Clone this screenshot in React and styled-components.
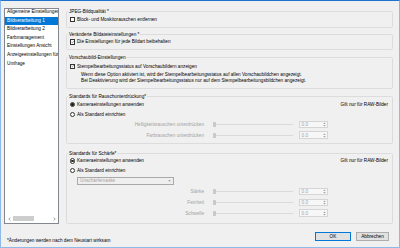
import styled, { createGlobalStyle } from 'styled-components';

const GlobalStyle = createGlobalStyle`
  html, body {
    margin: 0;
    padding: 0;
    background: #f0f0f0;
  }
  body {
    font-family: "Liberation Sans", Arial, sans-serif;
  }
  * {
    box-sizing: border-box;
  }
`;

const Window = styled.div`
  width: 400px;
  height: 248px;
  background: #f0f0f0;
  border: 1px solid #8fb9e6;
  border-top: 1px solid #1e74cc;
  display: flex;
  flex-direction: column;
  font-size: 4.7px;
  color: #000;
  overflow: hidden;
`;

const Body = styled.div`
  display: flex;
  height: 223px;
  flex: none;
  padding: 7px 6px 0 3px;
`;

const Sidebar = styled.div`
  width: 55px;
  height: 215.6px;
  background: #fff;
  border: 1px solid #828790;
  display: flex;
  flex-direction: column;
  overflow: hidden;
`;

const ItemList = styled.div`
  flex: 1;
  overflow: hidden;
`;

const ItemInner = styled.div`
  margin-top: -0.9px;
`;

const Item = styled.div`
  height: 8.6px;
  line-height: 8.6px;
  padding-left: 2px;
  white-space: nowrap;
  overflow: hidden;
  background: ${p => (p.$active ? '#0078d7' : 'transparent')};
  color: ${p => (p.$active ? '#fff' : '#000')};
`;

const HScroll = styled.div`
  height: 6.6px;
  display: flex;
  align-items: center;
  padding: 0 2.5px 0 3px;
  margin-bottom: 0.6px;
`;

const ScrollThumb = styled.div`
  width: 21px;
  height: 5px;
  margin-left: 2.3px;
  background: #cdcdcd;
`;

const ScrollSpacer = styled.div`
  flex: 1;
`;

const Main = styled.div`
  flex: 1;
  margin-left: 7px;
  display: flex;
  flex-direction: column;
`;

const Group = styled.fieldset`
  margin: ${p => p.$mt}px 0 0;
  padding: ${p => `${p.$pt}px 4px ${p.$pb}px 3px`};
  border: 1px solid #dcdcdc;
  border-radius: 1.5px;
  min-width: 0;
`;

const Legend = styled.legend`
  padding: 0 0.8px;
  margin-left: -1.8px;
  line-height: 5px;
  height: 5px;
  white-space: nowrap;
`;

const Row = styled.div`
  display: flex;
  align-items: center;
  height: ${p => p.$h}px;
  margin-top: ${p => p.$mt || 0}px;
`;

const Text = styled.span`
  margin-left: 1.7px;
  white-space: nowrap;
  color: ${p => (p.$disabled ? '#a3a3a3' : '#000')};
`;

const RightNote = styled.span`
  margin-left: auto;
  white-space: nowrap;
`;

const Desc = styled.div`
  margin: 1.9px 0 0 11px;
  line-height: 5.7px;
  white-space: nowrap;
`;

const CheckBox = styled.span`
  width: 5.3px;
  height: 5.3px;
  flex: none;
  border: 0.7px solid #333;
  background: #fff;
  display: flex;
  align-items: center;
  justify-content: center;
`;

const RadioOuter = styled.span`
  width: 5.3px;
  height: 5.3px;
  flex: none;
  border-radius: 50%;
  border: 0.7px solid #333;
  background: #fff;
  display: flex;
  align-items: center;
  justify-content: center;
`;

const RadioDot = styled.span`
  width: 2.4px;
  height: 2.4px;
  border-radius: 50%;
  background: #222;
`;

const SliderLabel = styled.span`
  width: 134px;
  text-align: right;
  white-space: nowrap;
  color: #a3a3a3;
`;

const Track = styled.div`
  width: 80px;
  margin-left: 9px;
  display: flex;
  align-items: center;
`;

const Thumb = styled.span`
  width: 2.6px;
  height: 5px;
  flex: none;
  background: #c9c9c9;
  border-radius: 0.4px;
`;

const TrackLine = styled.span`
  flex: 1;
  height: 1px;
  background: #dadada;
`;

const Spin = styled.div`
  width: 29px;
  height: 7.6px;
  margin-left: 6px;
  border: 0.7px solid #d5d5d5;
  background: #f7f7f7;
  display: flex;
  align-items: center;
  padding: 0 1.4px 0 1.6px;
  color: #a3a3a3;
`;

const SpinValue = styled.span`
  flex: 1;
`;

const Dropdown = styled.div`
  width: 97px;
  height: 8px;
  margin-left: 7px;
  border: 0.8px solid #a9a9a9;
  background: #efefef;
  display: flex;
  align-items: center;
  padding: 0 2.4px 0 2px;
  color: #a3a3a3;
`;

const Footer = styled.div`
  flex: 1;
  display: flex;
  align-items: flex-start;
  padding: 8px 10px 0 6px;
`;

const Note = styled.span`
  flex: 1;
  margin-top: 5.5px;
  line-height: 5px;
  white-space: nowrap;
`;

const Button = styled.div`
  width: ${p => p.$w}px;
  height: 9px;
  margin-left: 5px;
  background: #e1e1e1;
  border: 1px solid ${p => (p.$primary ? '#0078d7' : '#adadad')};
  display: flex;
  align-items: center;
  justify-content: center;
`;

const Check = ({ checked }) => (
  <CheckBox>
    {checked && (
      <svg width="4" height="4" viewBox="0 0 10 10">
        <path d="M1.5 5.2 L4 7.6 L8.6 2.4" fill="none" stroke="#222" strokeWidth="1.4" />
      </svg>
    )}
  </CheckBox>
);

const Radio = ({ checked }) => <RadioOuter>{checked && <RadioDot />}</RadioOuter>;

const Chevron = ({ dir }) => (
  <svg width="3" height="4" viewBox="0 0 6 8">
    <path d={dir === 'left' ? 'M4.5 1 L1.5 4 L4.5 7' : 'M1.5 1 L4.5 4 L1.5 7'} fill="none" stroke="#606060" strokeWidth="1.2" />
  </svg>
);

const SpinArrows = () => (
  <svg width="3" height="5" viewBox="0 0 6 10">
    <path d="M3 1 L5.5 3.8 L0.5 3.8 Z M3 9 L5.5 6.2 L0.5 6.2 Z" fill="#a0a0a0" />
  </svg>
);

const DropArrow = () => (
  <svg width="3" height="2" viewBox="0 0 6 4">
    <path d="M0.5 0.5 L5.5 0.5 L3 3.5 Z" fill="#8a8a8a" />
  </svg>
);

const SliderRow = ({ label }) => (
  <Row $h={10.7}>
    <SliderLabel>{label}</SliderLabel>
    <Track>
      <Thumb />
      <TrackLine />
    </Track>
    <Spin>
      <SpinValue>0.0</SpinValue>
      <SpinArrows />
    </Spin>
  </Row>
);

const sections = [
  'Allgemeine Einstellungen',
  'Bildverarbeitung 1',
  'Bildverarbeitung 2',
  'Farbmanagement',
  'Einstellungen Ansicht',
  'Anzeigeeinstellungen für',
  'Umfrage',
];

export default function App() {
  return (
    <>
      <GlobalStyle />
      <Window>
        <Body>
          <Sidebar>
            <ItemList>
              <ItemInner>
                {sections.map((s, i) => (
                  <Item key={s} $active={i === 1}>{s}</Item>
                ))}
              </ItemInner>
            </ItemList>
            <HScroll>
              <Chevron dir="left" />
              <ScrollThumb />
              <ScrollSpacer />
              <Chevron dir="right" />
            </HScroll>
          </Sidebar>

          <Main>
            <Group $mt={0.7} $pt={1.6} $pb={3.4}>
              <Legend>JPEG-Bildqualität *</Legend>
              <Row $h={8}>
                <Check />
                <Text>Block- und Moskitorauschen entfernen</Text>
              </Row>
            </Group>

            <Group $mt={4.3} $pt={1} $pb={3.3}>
              <Legend>Veränderte Bildateieinstellungen *</Legend>
              <Row $h={8}>
                <Check checked />
                <Text>Die Einstellungen für jede Bildart beibehalten</Text>
              </Row>
            </Group>

            <Group $mt={5} $pt={2} $pb={4.7}>
              <Legend>Vorschaubild-Einstellungen</Legend>
              <Row $h={8}>
                <Check checked />
                <Text>Stempelbearbeitungsstatus auf Vorschaubildern anzeigen</Text>
              </Row>
              <Desc>
                Wenn diese Option aktiviert ist, wird der Stempelbearbeitungsstatus auf allen Vorschaubildchen angezeigt.
                <br />
                Bei Deaktivierung wird der Stempelbearbeitungsstatus nur auf dem Stempelbearbeitungsbildchen angezeigt.
              </Desc>
            </Group>

            <Group $mt={4.7} $pt={0.9} $pb={2.8}>
              <Legend>Standards für Rauschunterdrückung*</Legend>
              <Row $h={9.6}>
                <Radio checked />
                <Text>Kameraeinstellungen anwenden</Text>
                <RightNote>Gilt nur für RAW-Bilder</RightNote>
              </Row>
              <Row $h={9.6}>
                <Radio />
                <Text>Als Standard einrichten</Text>
              </Row>
              <SliderRow label="Helligkeitsrauschen unterdrücken" />
              <SliderRow label="Farbrauschen unterdrücken" />
            </Group>

            <Group $mt={6.7} $pt={0.2} $pb={4.4}>
              <Legend>Standards für Schärfe*</Legend>
              <Row $h={9.6}>
                <Radio checked />
                <Text>Kameraeinstellungen anwenden</Text>
                <RightNote>Gilt nur für RAW-Bilder</RightNote>
              </Row>
              <Row $h={9.6}>
                <Radio />
                <Text>Als Standard einrichten</Text>
              </Row>
              <Row $h={8} $mt={1.5}>
                <Dropdown>
                  <SpinValue>Unschärfemaske</SpinValue>
                  <DropArrow />
                </Dropdown>
              </Row>
              <Row $h={1.6} />
              <SliderRow label="Stärke" />
              <SliderRow label="Feinheit" />
              <SliderRow label="Schwelle" />
            </Group>
          </Main>
        </Body>

        <Footer>
          <Note>*Änderungen werden nach dem Neustart wirksam</Note>
          <Button $w={36} $primary>OK</Button>
          <Button $w={33}>Abbrechen</Button>
        </Footer>
      </Window>
    </>
  );
}
